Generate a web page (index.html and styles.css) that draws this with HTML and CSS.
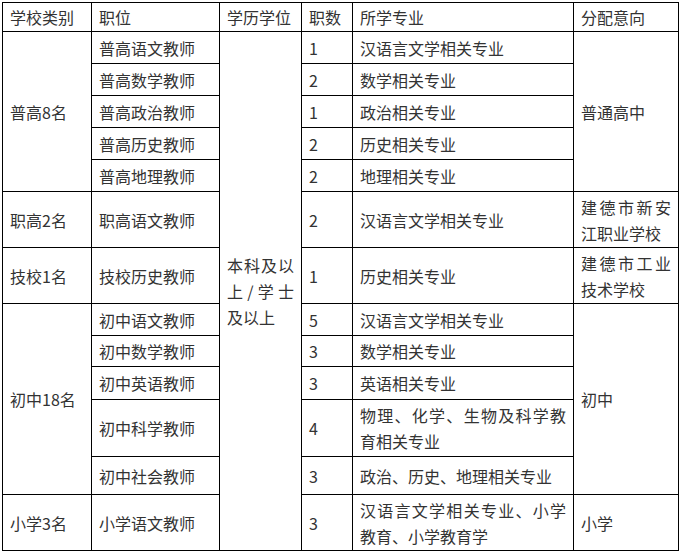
FILE: index.html
```html
<!DOCTYPE html>
<html lang="zh-CN">
<head>
<meta charset="utf-8">
<title>招聘计划</title>
<link rel="stylesheet" href="styles.css">
</head>
<body>
<table class="plan">
  <colgroup>
    <col class="c1"><col class="c2"><col class="c3"><col class="c4"><col class="c5"><col class="c6">
  </colgroup>
  <tbody>
    <tr class="h29">
      <td>学校类别</td><td>职位</td><td>学历学位</td><td>职数</td><td>所学专业</td><td>分配意向</td>
    </tr>
    <tr class="h32">
      <td rowspan="5">普高8名</td><td>普高语文教师</td>
      <td rowspan="13" class="just">本科及以上/学士及以上</td>
      <td>1</td><td>汉语言文学相关专业</td><td rowspan="5">普通高中</td>
    </tr>
    <tr class="h32"><td>普高数学教师</td><td>2</td><td>数学相关专业</td></tr>
    <tr class="h32"><td>普高政治教师</td><td>1</td><td>政治相关专业</td></tr>
    <tr class="h32"><td>普高历史教师</td><td>2</td><td>历史相关专业</td></tr>
    <tr class="h32"><td>普高地理教师</td><td>2</td><td>地理相关专业</td></tr>
    <tr class="h56">
      <td>职高2名</td><td>职高语文教师</td><td>2</td><td>汉语言文学相关专业</td><td class="just">建德市新安江职业学校</td>
    </tr>
    <tr class="h56">
      <td>技校1名</td><td>技校历史教师</td><td>1</td><td>历史相关专业</td><td class="just">建德市工业技术学校</td>
    </tr>
    <tr class="h32">
      <td rowspan="5">初中18名</td><td>初中语文教师</td><td>5</td><td>汉语言文学相关专业</td><td rowspan="5">初中</td>
    </tr>
    <tr class="h31"><td>初中数学教师</td><td>3</td><td>数学相关专业</td></tr>
    <tr class="h33"><td>初中英语教师</td><td>3</td><td>英语相关专业</td></tr>
    <tr class="h57"><td>初中科学教师</td><td>4</td><td class="just">物理、化学、生物及科学教育相关专业</td></tr>
    <tr class="h38"><td>初中社会教师</td><td>3</td><td>政治、历史、地理相关专业</td></tr>
    <tr class="h56">
      <td>小学3名</td><td>小学语文教师</td><td>3</td><td class="just">汉语言文学相关专业、小学教育、小学教育学</td><td>小学</td>
    </tr>
  </tbody>
</table>
</body>
</html>
```

FILE: styles.css
```css
html, body {
  margin: 0;
  padding: 0;
  background: #ffffff;
}
body {
  padding: 2px;
  font-family: "Noto Sans CJK SC", "Noto Sans", sans-serif;
  font-size: 16px;
  color: #333333;
}
.plan {
  border-collapse: collapse;
  table-layout: fixed;
  width: 677px;
}
.plan td {
  border: 1px solid #000000;
  padding: 0 7px;
  vertical-align: middle;
  line-height: 26px;
  text-align: left;
  word-break: break-all;
}
.plan td.just {
  text-align: justify;
}
.c1 { width: 89px; }
.c2 { width: 128px; }
.c3 { width: 82px; }
.c4 { width: 51px; }
.c5 { width: 221px; }
.c6 { width: 105px; }
.h29 { height: 29px; }
.h31 { height: 31px; }
.h32 { height: 32px; }
.h33 { height: 33px; }
.h38 { height: 38px; }
.h56 { height: 56px; }
.h57 { height: 57px; }
```
